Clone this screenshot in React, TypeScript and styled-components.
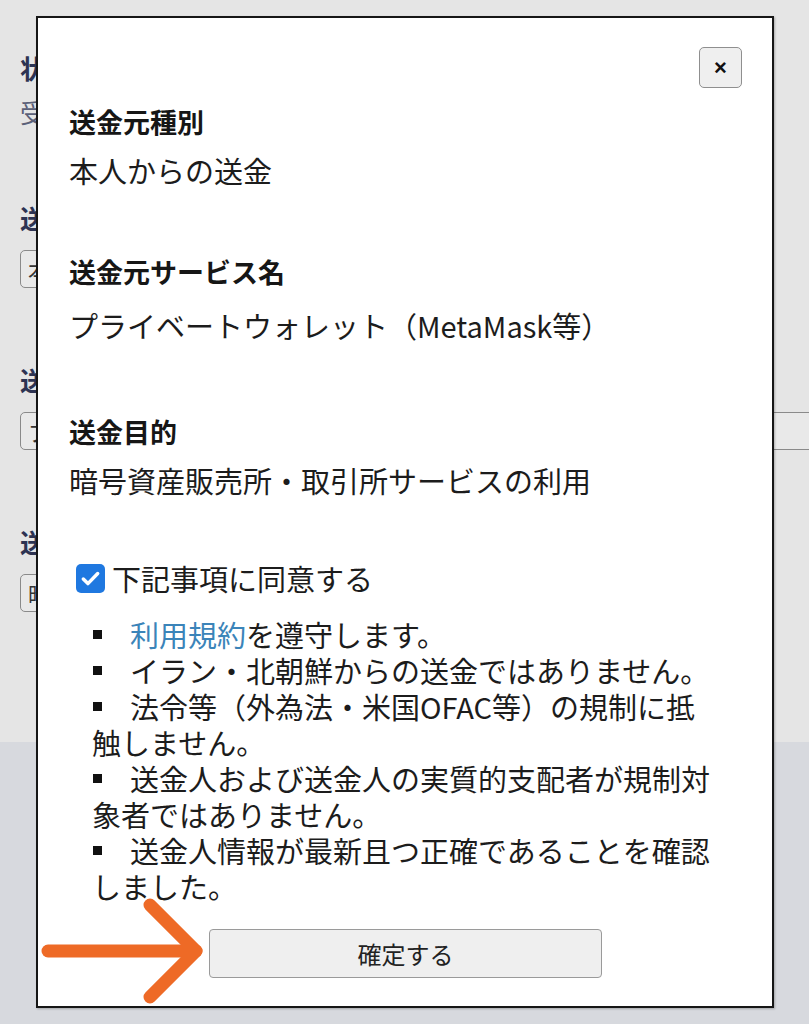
import styled, { createGlobalStyle } from "styled-components";

const GlobalStyle = createGlobalStyle`
  html, body {
    margin: 0;
    padding: 0;
    overflow: hidden;
  }
  body {
    font-family: "Noto Sans CJK JP", "Noto Sans", sans-serif;
    color: #1c1c1c;
  }
`;

const Screen = styled.div`
  position: relative;
  width: 809px;
  height: 1024px;
  overflow: hidden;
  background: #d7d9de;
`;

// the form behind the dialog, only its edges show
const Page = styled.div`
  height: 742px;
  box-sizing: border-box;
  padding: 52px 0 0 20px;
  background: #e5e5e5;
  display: flex;
  flex-direction: column;
`;

const FieldTitle = styled.div`
  width: 16px;
  overflow: hidden;
  font-size: 26px;
  line-height: 32px;
  font-weight: 700;
  color: #2d3352;
  white-space: nowrap;
`;

const FieldValue = styled.div`
  width: 16px;
  overflow: hidden;
  margin-top: 12px;
  font-size: 26px;
  line-height: 32px;
  color: #5b6078;
  white-space: nowrap;
`;

const Field = styled.div<{ $space: number }>`
  display: flex;
  flex-direction: column;
  margin-bottom: ${(p) => p.$space}px;
`;

const FakeSelect = styled.div<{ $width: number }>`
  margin-top: 16px;
  width: ${(p) => p.$width}px;
  height: 38px;
  box-sizing: border-box;
  border: 1px solid #8a8a8a;
  border-radius: 5px;
  background: #e9e9e9;
  padding-left: 7px;
  font-size: 22px;
  line-height: 36px;
  color: #333;
  white-space: nowrap;
  overflow: hidden;
`;

const SelectText = styled.span`
  display: inline-block;
  width: 9px;
  overflow: hidden;
  vertical-align: top;
`;

const Dialog = styled.div`
  position: absolute;
  top: 16px;
  left: 36px;
  width: 738px;
  height: 992px;
  box-sizing: border-box;
  border: 2px solid #161616;
  background: #fff;
  padding: 29px 30px 0 31px;
  display: flex;
  flex-direction: column;
  box-shadow: 1px 1px 2px rgba(0, 0, 0, 0.25);
`;

const CloseRow = styled.div`
  display: flex;
  justify-content: flex-end;
  margin-bottom: 16px;
`;

const CloseButton = styled.button`
  width: 43px;
  height: 41px;
  padding: 0;
  border: 1px solid #8f8f8f;
  border-radius: 5px;
  background: #efefef;
  font-family: "Liberation Sans", Arial, sans-serif;
  font-size: 22px;
  font-weight: 700;
  line-height: 1;
  color: #111;
`;

const Section = styled.section<{ $space: number; $valueGap: number }>`
  display: flex;
  flex-direction: column;
  margin-bottom: ${(p) => p.$space}px;
  & > p {
    margin-top: ${(p) => p.$valueGap}px;
  }
`;

const Heading = styled.h3`
  margin: 0;
  font-size: 27px;
  line-height: 36px;
  font-weight: 700;
  color: #161616;
`;

const Value = styled.p`
  margin: 0;
  font-size: 29px;
  line-height: 36px;
  color: #1c1c1c;
  white-space: nowrap;
`;

const AgreeRow = styled.label`
  display: flex;
  align-items: center;
  gap: 7px;
  height: 36px;
  padding-left: 7px;
  font-size: 29px;
  line-height: 36px;
`;

const CheckBox = styled.span`
  flex-shrink: 0;
  width: 29px;
  height: 29px;
  border-radius: 5px;
  background: #1f78e0;
  display: flex;
  align-items: center;
  justify-content: center;
`;

const Rules = styled.div`
  margin: 20px 0 0 23px;
  width: 628px;
  font-size: 29px;
  line-height: 36px;
  color: #1c1c1c;
`;

const Rule = styled.div``;

const Bullet = styled.span`
  display: inline-block;
  width: 9px;
  height: 9px;
  background: #111;
  margin: 0 28px 0 1px;
  vertical-align: 8px;
`;

const RuleLink = styled.a`
  color: #3b84b9;
  text-decoration: none;
`;

const ConfirmButton = styled.button`
  align-self: center;
  margin-top: 25px;
  width: 393px;
  height: 49px;
  border: 1px solid #9a9a9a;
  border-radius: 4px;
  background: #efefef;
  font-family: "Noto Sans CJK JP", sans-serif;
  font-size: 24px;
  color: #222;
`;

const Arrow = styled.svg`
  position: absolute;
  left: 38px;
  top: 895px;
`;

const rules = [
  "イラン・北朝鮮からの送金ではありません。",
  "法令等（外為法・米国OFAC等）の規制に抵触しません。",
  "送金人および送金人の実質的支配者が規制対象者ではありません。",
  "送金人情報が最新且つ正確であることを確認しました。",
];

export default function App() {
  return (
    <Screen>
      <GlobalStyle />
      <Page>
        <Field $space={74}>
          <FieldTitle>状況</FieldTitle>
          <FieldValue>受付済み</FieldValue>
        </Field>
        <Field $space={76}>
          <FieldTitle>送金元種別</FieldTitle>
          <FakeSelect $width={600}>
            <SelectText>本</SelectText>
          </FakeSelect>
        </Field>
        <Field $space={76}>
          <FieldTitle>送金元サービス名</FieldTitle>
          <FakeSelect $width={900}>
            <SelectText>プ</SelectText>
          </FakeSelect>
        </Field>
        <Field $space={0}>
          <FieldTitle>送金目的</FieldTitle>
          <FakeSelect $width={600}>
            <SelectText>暗</SelectText>
          </FakeSelect>
        </Field>
      </Page>

      <Dialog>
        <CloseRow>
          <CloseButton>×</CloseButton>
        </CloseRow>
        <Section $space={66} $valueGap={12}>
          <Heading>送金元種別</Heading>
          <Value>本人からの送金</Value>
        </Section>
        <Section $space={71} $valueGap={17}>
          <Heading>送金元サービス名</Heading>
          <Value>プライベートウォレット（MetaMask等）</Value>
        </Section>
        <Section $space={62} $valueGap={12}>
          <Heading>送金目的</Heading>
          <Value>暗号資産販売所・取引所サービスの利用</Value>
        </Section>
        <AgreeRow>
          <CheckBox>
            <svg width="23" height="23" viewBox="0 0 24 24">
              <path
                d="M4.5 12.5l4.8 4.8L19.5 6.8"
                fill="none"
                stroke="#fff"
                strokeWidth="3.6"
                strokeLinecap="round"
                strokeLinejoin="round"
              />
            </svg>
          </CheckBox>
          下記事項に同意する
        </AgreeRow>
        <Rules>
          <Rule>
            <Bullet />
            <RuleLink href="#">利用規約</RuleLink>を遵守します。
          </Rule>
          {rules.map((r) => (
            <Rule key={r}>
              <Bullet />
              {r}
            </Rule>
          ))}
        </Rules>
        <ConfirmButton>確定する</ConfirmButton>
      </Dialog>

      <Arrow width="170" height="112" viewBox="0 0 170 112">
        <g
          fill="none"
          stroke="#ee6a26"
          strokeWidth="13"
          strokeLinecap="round"
          strokeLinejoin="round"
        >
          <path d="M10 56H158" />
          <path d="M112 10L158 56L112 102" />
        </g>
      </Arrow>
    </Screen>
  );
}
